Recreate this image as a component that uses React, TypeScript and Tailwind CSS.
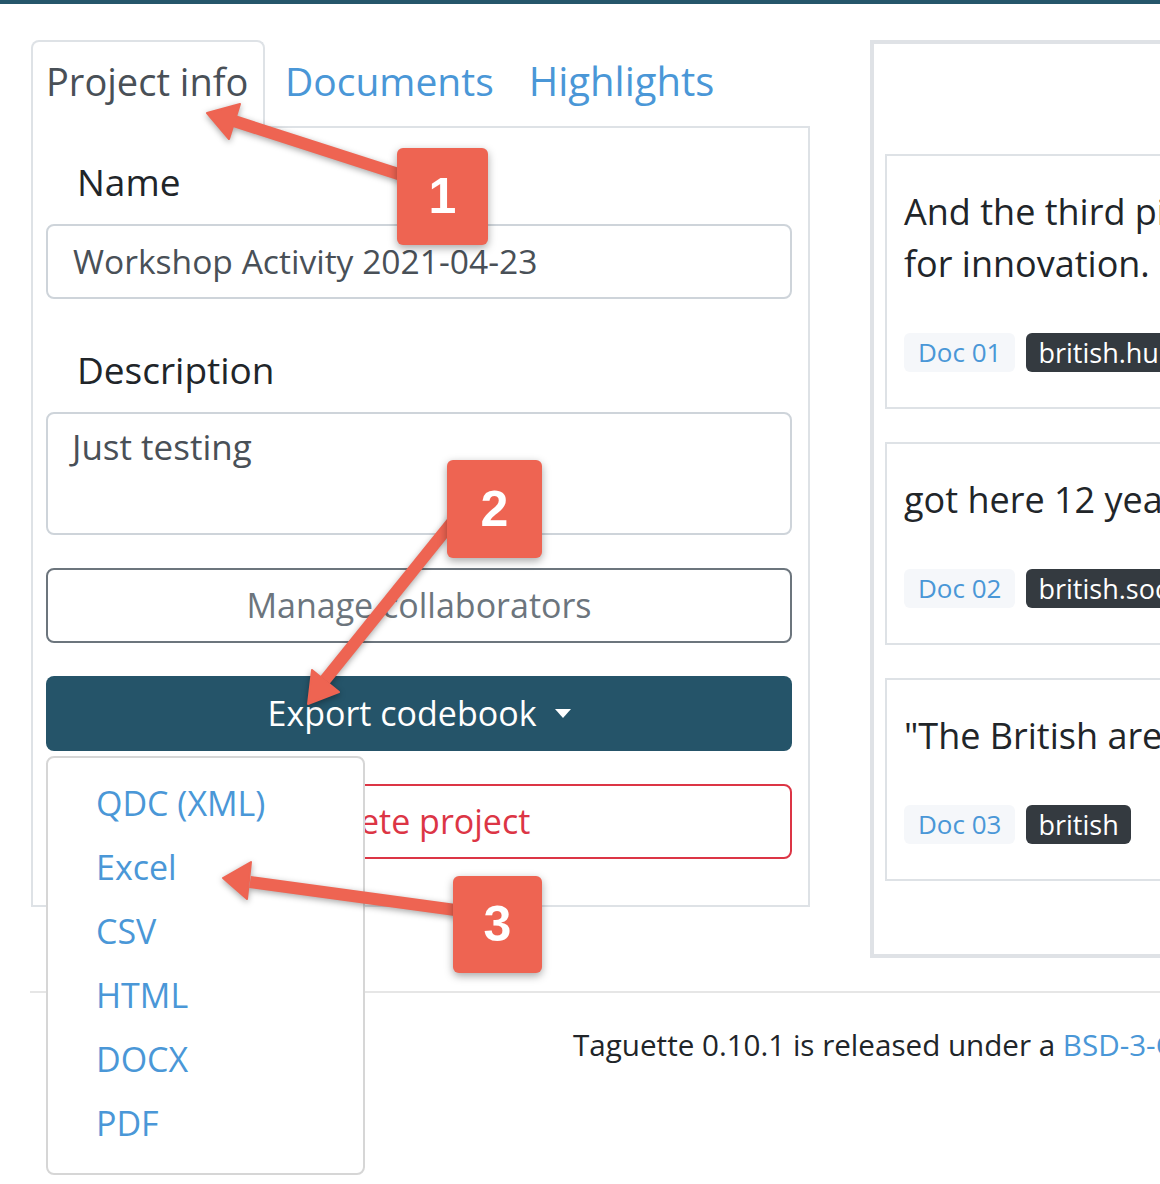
import React from "react";

const items = ["QDC (XML)", "Excel", "CSV", "HTML", "DOCX", "PDF"];

function Badge({ doc, tag }: { doc: string; tag: string }) {
  return (
    <div className="flex items-center gap-[11px] mt-[43px]">
      <span className="h-[39px] px-[14px] rounded-[6px] bg-[#f5f7fa] text-[#4a97d7] text-[26px] leading-[39px] whitespace-nowrap">
        {doc}
      </span>
      <span className="h-[39px] px-[12px] rounded-[6px] bg-[#343a40] text-white text-[27px] font-medium leading-[39px] whitespace-nowrap">
        {tag}
      </span>
    </div>
  );
}

function Card({ lines, doc, tag }: { lines: string[]; doc: string; tag: string }) {
  return (
    <div className="border-2 border-[#dee2e6] pl-[17px] pt-[30px] pb-[35px] w-[620px]">
      <div className="text-[36px] leading-[52px] text-[#212529]">
        {lines.map((l) => (
          <div key={l} className="whitespace-nowrap">
            {l}
          </div>
        ))}
      </div>
      <Badge doc={doc} tag={tag} />
    </div>
  );
}

export default function App() {
  return (
    <div className="relative w-[1160px] h-[1184px] overflow-hidden bg-white font-['Open_Sans',sans-serif] text-[#212529]">
      <div className="h-[4px] bg-[#25566b]" />
      <div className="flex items-start pt-[36px] pl-[31px] gap-[60px]">
        {/* Left column */}
        <div className="w-[779px] shrink-0">
          <div className="flex h-[86px] items-start">
            <div className="relative z-10 h-[88px] w-[234px] bg-white border-2 border-b-0 border-[#dee2e6] rounded-t-[8px] pl-[13px] pt-[11px] text-[38px] leading-[57px] text-[#495057] whitespace-nowrap">
              Project info
            </div>
            <div className="h-[88px] pl-[20px] pr-[18px] pt-[12px] text-[39px] leading-[57px] text-[#4a97d7] whitespace-nowrap">
              Documents
            </div>
            <div className="h-[88px] pl-[17px] pt-[12px] text-[40px] leading-[57px] text-[#4a97d7] whitespace-nowrap">
              Highlights
            </div>
          </div>
          <div className="border-2 border-[#dee2e6] pl-[13px] pr-[16px] pt-[28px] pb-[46px]">
            <div className="pl-[31px] text-[37px] leading-[52px] mb-[16px]">Name</div>
            <div className="h-[75px] border-2 border-[#ced4da] rounded-[8px] pl-[25px] flex items-center text-[33.6px] text-[#495057] whitespace-nowrap">
              Workshop Activity 2021-04-23
            </div>
            <div className="pl-[31px] text-[37px] leading-[52px] mt-[45px] mb-[16px]">Description</div>
            <div className="h-[123px] border-2 border-[#ced4da] rounded-[8px] pl-[24px] pt-[7px] text-[35px] leading-[51px] text-[#495057]">
              Just testing
            </div>
            <div className="mt-[33px] h-[75px] border-2 border-[#6c757d] rounded-[8px] flex items-center justify-center text-[34px] text-[#6c757d] whitespace-nowrap">
              Manage collaborators
            </div>
            <div className="relative mt-[33px]">
              <div className="h-[75px] bg-[#255469] rounded-[8px] flex items-center justify-center text-[34px] text-white whitespace-nowrap">
                Export codebook
                <span className="ml-[18px] inline-block w-0 h-0 border-t-[9px] border-t-white border-x-[8px] border-x-transparent" />
              </div>
              <div className="absolute z-20 left-0 top-[80px] w-[319px] h-[419px] bg-white border-2 border-[#d6d6d6] rounded-[8px] pt-[13px] pl-[48px]">
                {items.map((it) => (
                  <div key={it} className="h-[64px] text-[34px] leading-[64px] text-[#4a97d7] whitespace-nowrap">
                    {it}
                  </div>
                ))}
              </div>
            </div>
            <div className="mt-[33px] h-[75px] border-2 border-[#dc3545] rounded-[8px] flex items-center justify-center text-[34px] text-[#dc3545] whitespace-nowrap">
              Delete project
            </div>
          </div>
        </div>

        {/* Right column */}
        <div className="w-[640px] h-[918px] shrink-0 border-4 border-[#dfe2e6] pl-[11px] pt-[110px] flex flex-col gap-[33px]">
          <Card
            lines={["And the third pillar is our capacity", "for innovation."]}
            doc="Doc 01"
            tag="british.humour"
          />
          <Card lines={["got here 12 years ago and never left"]} doc="Doc 02" tag="british.society" />
          <Card lines={['"The British are very polite"']} doc="Doc 03" tag="british" />
        </div>
      </div>

      <div className="ml-[30px] mt-[33px] h-[2px] bg-[#e6e6e6]" />
      <div className="pl-[573px] mt-[29px] text-[29.6px] leading-[45px] whitespace-nowrap text-[#212529]">
        Taguette 0.10.1 is released under a <span className="text-[#4a97d7]">BSD-3-Clause license</span>
      </div>

      {/* Annotations */}
      <svg
        className="absolute left-0 top-0 z-30 pointer-events-none drop-shadow-[0_2px_3px_rgba(0,0,0,0.35)]"
        width="1160"
        height="1184"
        viewBox="0 0 1160 1184"
      >
        <g fill="#ee6452" stroke="#ee6452">
          <line x1="234" y1="121" x2="420" y2="181" strokeWidth="12" />
          <polygon points="207,113 240,104 229,139" strokeWidth="2" strokeLinejoin="round" />
          <line x1="325" y1="680" x2="470" y2="500" strokeWidth="12" />
          <polygon points="308,704 312,670 339,692" strokeWidth="2" strokeLinejoin="round" />
          <line x1="250" y1="882" x2="470" y2="912" strokeWidth="12" />
          <polygon points="223,878 251,862 247,899" strokeWidth="2" strokeLinejoin="round" />
        </g>
      </svg>
      <div className="absolute z-40 left-[397px] top-[148px] w-[91px] h-[97px] rounded-[6px] bg-[#ee6452] shadow-[0_3px_8px_rgba(0,0,0,0.35)] flex items-center justify-center text-white text-[50px] font-bold font-['Liberation_Sans',sans-serif]">
        1
      </div>
      <div className="absolute z-40 left-[447px] top-[460px] w-[95px] h-[98px] rounded-[6px] bg-[#ee6452] shadow-[0_3px_8px_rgba(0,0,0,0.35)] flex items-center justify-center text-white text-[50px] font-bold font-['Liberation_Sans',sans-serif]">
        2
      </div>
      <div className="absolute z-40 left-[453px] top-[876px] w-[89px] h-[97px] rounded-[6px] bg-[#ee6452] shadow-[0_3px_8px_rgba(0,0,0,0.35)] flex items-center justify-center text-white text-[50px] font-bold font-['Liberation_Sans',sans-serif]">
        3
      </div>
    </div>
  );
}
